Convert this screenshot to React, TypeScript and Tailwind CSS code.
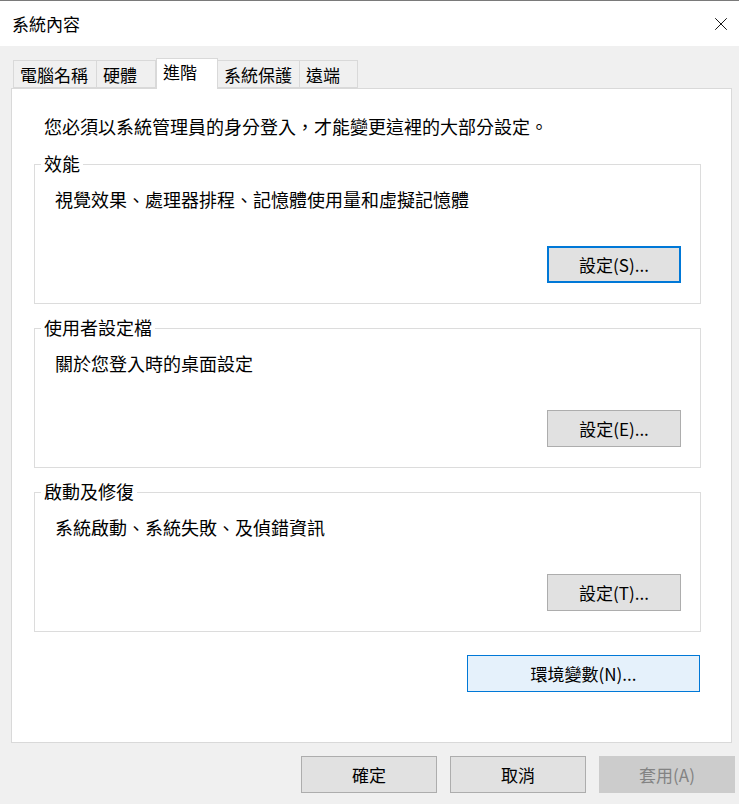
import { X } from 'lucide-react'

const tabs = [
  { label: '電腦名稱', w: 'w-[84px]' },
  { label: '硬體', w: 'w-[59px]' },
  { label: '進階', w: 'w-[62px]', active: true },
  { label: '系統保護', w: 'w-[82px]' },
  { label: '遠端', w: 'w-[58px]' },
]

function GroupBox({ title, text, button, focused }: { title: string; text: string; button: string; focused?: boolean }) {
  return (
    <div className="relative ml-[22px] flex h-[140px] w-[667px] flex-col border border-[#dcdcdc] pt-[23px] pl-[20px]">
      <div className="absolute -top-[13px] left-[6px] bg-white px-[3px] text-[18px] leading-[22px]">{title}</div>
      <div className="text-[18px] leading-[22px]">{text}</div>
      <button
        className={`mt-[36px] mr-[19px] h-[37px] w-[134px] self-end bg-[#e1e1e1] text-[17px] leading-[22px] ${
          focused ? 'border-2 border-[#0078d7]' : 'border border-[#adadad]'
        }`}
      >
        {button}
      </button>
    </div>
  )
}

export default function App() {
  return (
    <div
      className="flex h-[804px] w-[739px] flex-col bg-[#f0f0f0] text-black"
      style={{ fontFamily: '"Noto Sans CJK TC", "Noto Sans", sans-serif' }}
    >
      {/* title bar */}
      <div className="h-px bg-[#7a7a7a]" />
      <div className="flex h-[45px] items-center justify-between bg-white pl-[12px] pr-[7px]">
        <span className="text-[17px] leading-[22px]">系統內容</span>
        <X className="h-[22px] w-[22px]" strokeWidth={1} />
      </div>

      {/* tabs */}
      <div className="relative z-10 mt-[12px] flex h-[31px] items-start pl-[13px]">
        {tabs.map((t) =>
          t.active ? (
            <div
              key={t.label}
              className={`${t.w} h-[31px] border border-b-0 border-[#d9d9d9] bg-white pl-[6px] pt-[1px] text-[17px] leading-[24px]`}
            >
              {t.label}
            </div>
          ) : (
            <div
              key={t.label}
              className={`${t.w} mt-[2px] h-[28px] border border-l-0 first:border-l border-[#d9d9d9] bg-[#f0f0f0] pl-[6px] pt-[2px] text-[17px] leading-[24px]`}
            >
              {t.label}
            </div>
          )
        )}
      </div>

      {/* panel */}
      <div className="-mt-px ml-[11px] flex h-[655px] w-[721px] flex-col border border-[#d9d9d9] bg-white pt-[26px]">
        <div className="pl-[32px] text-[18px] leading-[22px]">
          您必須以系統管理員的身分登入，才能變更這裡的大部分設定。
        </div>
        <div className="mt-[27px] flex flex-col gap-[24px]">
          <GroupBox title="效能" text="視覺效果、處理器排程、記憶體使用量和虛擬記憶體" button="設定(S)..." focused />
          <GroupBox title="使用者設定檔" text="關於您登入時的桌面設定" button="設定(E)..." />
          <GroupBox title="啟動及修復" text="系統啟動、系統失敗、及偵錯資訊" button="設定(T)..." />
        </div>
        <button className="ml-[455px] mt-[23px] h-[37px] w-[233px] border border-[#0078d7] bg-[#e5f1fb] text-[17px] leading-[22px]">
          環境變數(N)...
        </button>
      </div>

      {/* footer buttons */}
      <div className="mt-[13px] flex gap-[13px] pl-[301px]">
        <button className="h-[37px] w-[136px] border border-[#adadad] bg-[#e1e1e1] text-[17px] leading-[22px]">確定</button>
        <button className="h-[37px] w-[136px] border border-[#adadad] bg-[#e1e1e1] text-[17px] leading-[22px]">取消</button>
        <button className="h-[37px] w-[136px] border border-[#cccccc] bg-[#cccccc] text-[17px] leading-[22px] text-[#838383]">套用(A)</button>
      </div>
    </div>
  )
}
